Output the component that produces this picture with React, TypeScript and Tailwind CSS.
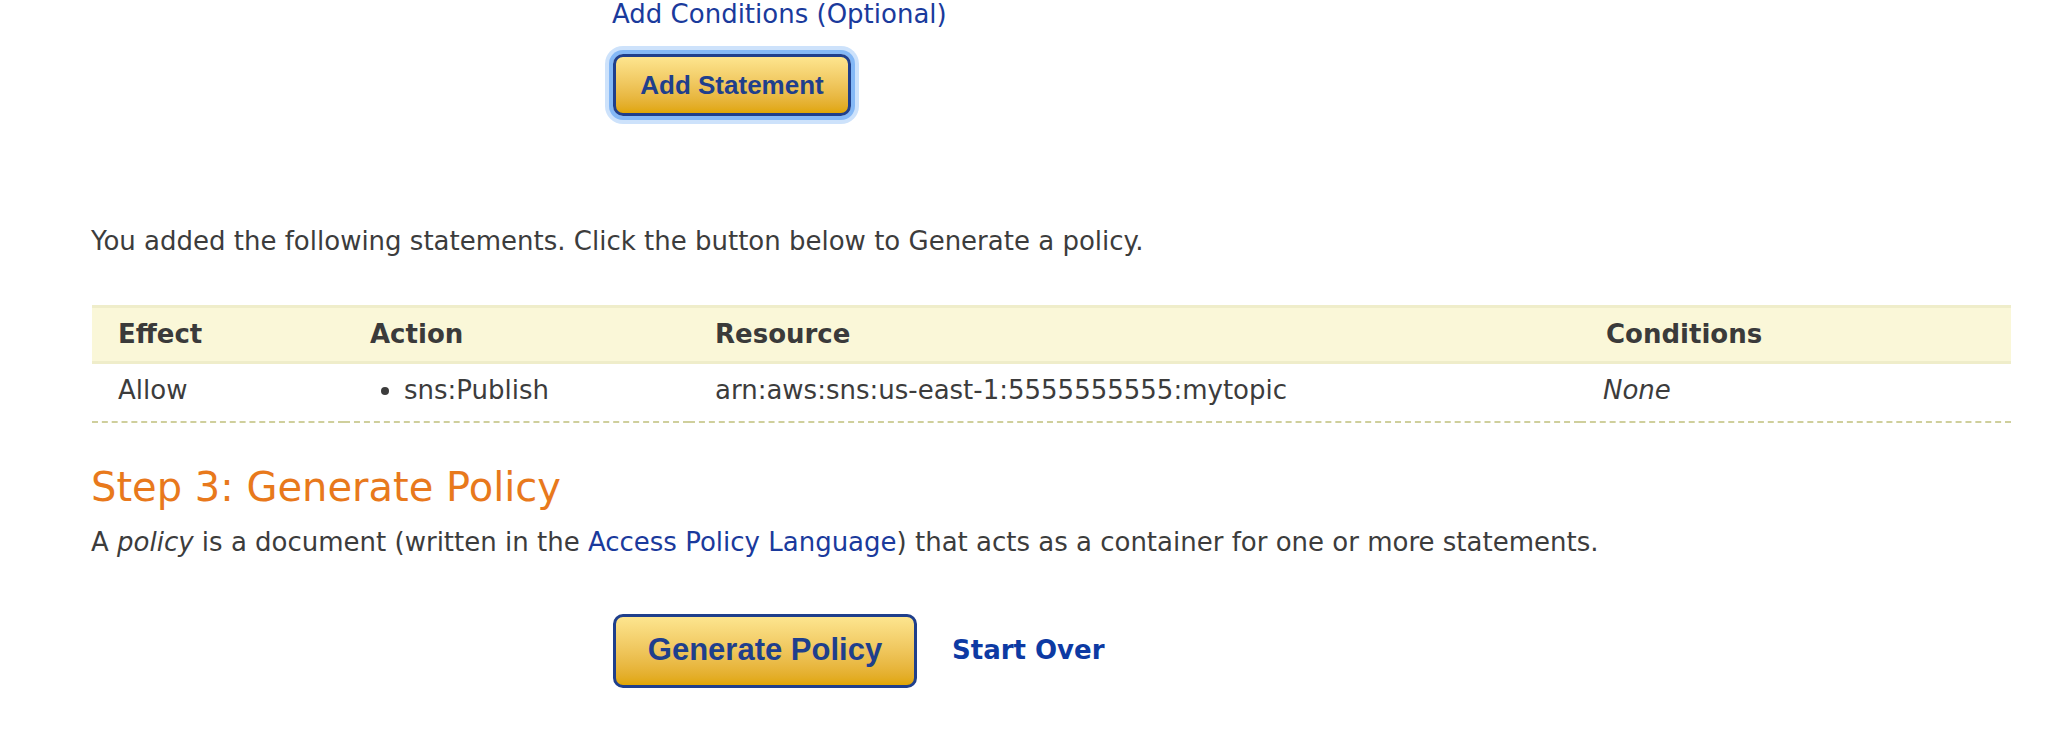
const verdana = { fontFamily: '"DejaVu Sans", Verdana, sans-serif' };

const YellowButton = ({ label, focused, size }: { label: string; focused?: boolean; size: 'md' | 'lg' }) => (
  <button
    type="button"
    className={`rounded-[10px] border-[3px] border-[#1f3f8c] bg-gradient-to-b from-[#fde58e] to-[#e0a600] font-bold text-[#1f3f8c] font-['Liberation_Sans',Arial,sans-serif] ${
      size === 'md' ? 'h-[62px] w-[238px] text-[26px]' : 'h-[74px] w-[304px] text-[31px]'
    } ${focused ? 'shadow-[0_0_0_4px_#84b8f6,0_0_0_8px_#cde2fb]' : ''}`}
  >
    {label}
  </button>
);

const App = () => {
  return (
    <div className="h-[734px] w-[2064px] overflow-hidden bg-white text-[26px] text-[#3c3c3c]" style={verdana}>
      <div className="pl-[612px] pt-[1px]">
        <a href="#" className="block leading-[26px] text-[#1a3a9c]">Add Conditions (Optional)</a>
        <div className="mt-[27px] pl-[1px]">
          <YellowButton label="Add Statement" focused size="md" />
        </div>
      </div>

      <div className="pl-[91px] pr-[53px]">
        <p className="mt-[110px] leading-[30px]">
          You added the following statements. Click the button below to Generate a policy.
        </p>

        <table className="mt-[49px] ml-[1px] w-[1919px] border-collapse text-left">
          <thead>
            <tr className="h-[56px] border-y-[3px] border-[#efedca] bg-[#faf7d8] text-[#3a3a3a]">
              <th className="w-[252px] pl-[26px] font-bold">Effect</th>
              <th className="w-[345px] pl-[26px] font-bold">Action</th>
              <th className="w-[891px] pl-[26px] font-bold">Resource</th>
              <th className="pl-[26px] font-bold">Conditions</th>
            </tr>
          </thead>
          <tbody>
            <tr className="h-[59px] border-b-2 border-dashed border-[#cfcf9c]">
              <td className="pl-[26px] pb-[4px]">Allow</td>
              <td className="pl-[43px] pb-[4px]">
                <ul className="list-disc pl-[17px]">
                  <li>sns:Publish</li>
                </ul>
              </td>
              <td className="pl-[26px] pb-[4px]">arn:aws:sns:us-east-1:5555555555:mytopic</td>
              <td className="pl-[23px] pb-[4px] italic">None</td>
            </tr>
          </tbody>
        </table>

        <h2 className="mt-[40px] text-[40px] leading-[48px] text-[#e8791c]">Step 3: Generate Policy</h2>
        <p className="mt-[16px] leading-[30px]">
          A <em>policy</em> is a document (written in the{' '}
          <a href="#" className="text-[#1a3a9c]">Access Policy Language</a>) that acts as a container for one or more statements.
        </p>
      </div>

      <div className="mt-[57px] flex items-center gap-[35px] pl-[613px]">
        <YellowButton label="Generate Policy" size="lg" />
        <a href="#" className="font-bold text-[#0d3aa3]">Start Over</a>
      </div>
    </div>
  );
};

export default App;
